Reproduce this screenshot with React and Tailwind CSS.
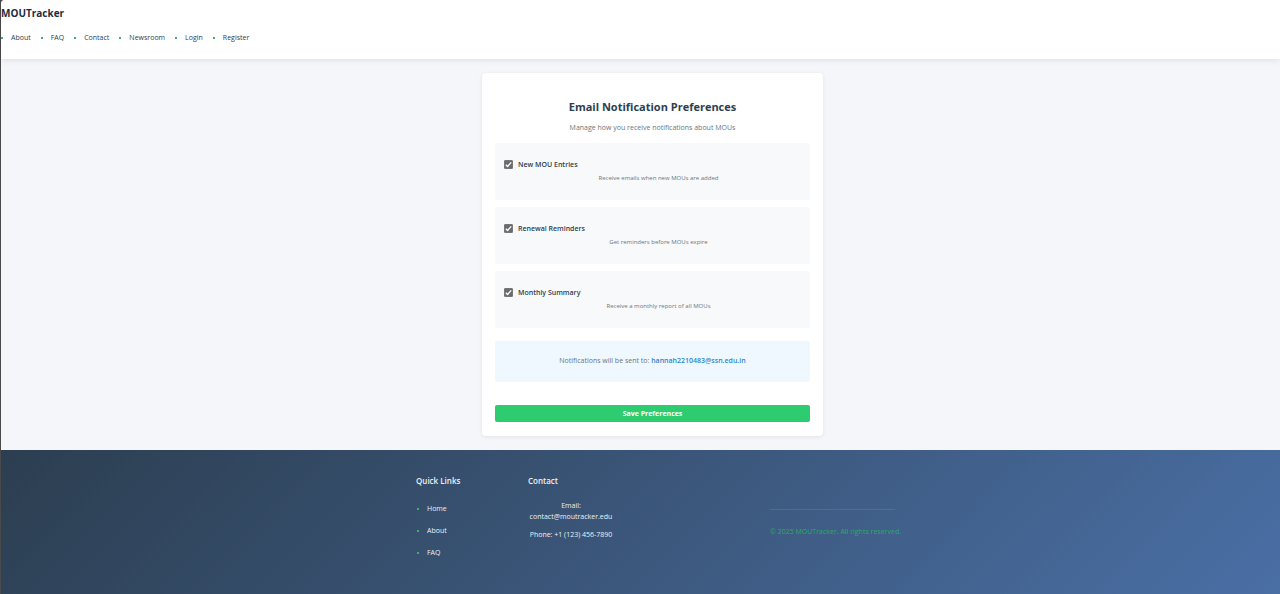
import React from "react";

const navLinks = ["About", "FAQ", "Contact", "Newsroom", "Login", "Register"];

const preferences = [
  { id: "new-entries", label: "New MOU Entries", text: "Receive emails when new MOUs are added" },
  { id: "renewals", label: "Renewal Reminders", text: "Get reminders before MOUs expire" },
  { id: "summary", label: "Monthly Summary", text: "Receive a monthly report of all MOUs" },
];

const footerLinks = ["Home", "About", "FAQ"];

function Bullet() {
  return <span aria-hidden="true" className="size-[2px] shrink-0 bg-[#3fae76]" />;
}

function Header() {
  return (
    <header className="relative rounded-tl bg-white pt-[5px] pb-[15px] shadow-[0_1px_6px_rgba(0,0,0,0.1)]">
      <div className="text-[10px] leading-4 font-bold text-[#1f2d3d]">MOUTracker</div>
      <nav className="mt-[11px]">
        <ul className="flex gap-[10px]">
          {navLinks.map((name) => (
            <li key={name} className="flex items-center gap-2">
              <Bullet />
              <a href="#" className="text-[7px] leading-3 text-[#2c3e50]">{name}</a>
            </li>
          ))}
        </ul>
      </nav>
    </header>
  );
}

function Preference({ id, label, text }) {
  return (
    <div className="rounded-xs bg-[#f8f9fa] px-[9px] pt-4 pb-[17px]">
      <div className="flex items-center gap-[5px]">
        <span className="relative size-[9px]">
          <input
            id={id}
            type="checkbox"
            defaultChecked
            className="peer block size-[9px] appearance-none rounded-[1px] border border-[#767676] bg-white checked:bg-[#6b6b6b]"
          />
          <svg
            viewBox="0 0 9 9"
            className="pointer-events-none absolute inset-0 hidden size-[9px] peer-checked:block"
            fill="none"
            stroke="#fff"
            strokeWidth="1.3"
          >
            <path d="M1.8 4.8 3.6 6.5 7.2 2.3" />
          </svg>
        </span>
        <label htmlFor={id} className="text-[7px] leading-[11px] font-semibold text-[#2c3e50]">{label}</label>
      </div>
      <p className="mt-[3px] pl-3 text-center text-[6px] leading-[10px] text-[#6c757d]">{text}</p>
    </div>
  );
}

function PreferencesCard() {
  return (
    <form
      onSubmit={(e) => e.preventDefault()}
      className="w-[341px] rounded bg-white px-[13px] pt-[25px] pb-[14px] shadow-[0_1px_4px_rgba(0,0,0,0.08)]"
    >
      <h1 className="text-center text-[11px] leading-[18px] font-bold text-[#2c3e50]">Email Notification Preferences</h1>
      <p className="mt-[7px] text-center text-[7px] leading-[10px] text-[#6c757d]">
        Manage how you receive notifications about MOUs
      </p>
      <div className="mt-[10px] flex flex-col gap-[7px]">
        {preferences.map((item) => (
          <Preference key={item.id} {...item} />
        ))}
      </div>
      <p className="mt-[13px] rounded-xs bg-[#f0f8ff] pt-[15px] pb-4 text-center text-[7px] leading-[10px] text-[#6c757d]">
        Notifications will be sent to: <strong className="font-semibold text-[#2e86d1]">hannah2210483@ssn.edu.in</strong>
      </p>
      <button type="submit" className="mt-[23px] block w-full rounded-xs bg-[#2ecc71] text-[7px] leading-[17px] font-bold text-white">
        Save Preferences
      </button>
    </form>
  );
}

function Footer() {
  return (
    <footer className="flex grow justify-center bg-linear-[135deg,#2c3e50,#4a6fa5] pt-[26px] pb-8 pl-[30px] text-[7px] text-[#ecf0f1]">
      <div className="grid grid-cols-[112px_242px_125px]">
        <div>
          <h2 className="text-[8px] leading-[10px] font-semibold">Quick Links</h2>
          <ul className="mt-[18px] flex flex-col gap-3">
            {footerLinks.map((name) => (
              <li key={name} className="flex items-center gap-2 pl-px">
                <Bullet />
                <a href="#" className="leading-[10px]">{name}</a>
              </li>
            ))}
          </ul>
        </div>
        <div>
          <h2 className="text-[8px] leading-[10px] font-semibold">Contact</h2>
          <div className="mt-[14px] w-[86px] text-center leading-[11px]">
            <p>Email:<br />contact@moutracker.edu</p>
            <p className="mt-[7px]">Phone: +1 (123) 456-7890</p>
          </div>
        </div>
        <div className="pt-[33px]">
          <p className="border-t border-white/10 pt-[17px] text-center leading-[10px] whitespace-nowrap text-[#27ae60]">
            © 2025 MOUTracker. All rights reserved.
          </p>
        </div>
      </div>
    </footer>
  );
}

export default function App() {
  return (
    <div className="min-h-screen bg-[#4a4a4a] pl-px font-['Open_Sans',sans-serif]">
      <div className="flex min-h-screen flex-col rounded-tl bg-[#f4f6fa]">
        <Header />
        <main className="flex justify-center pt-[14px] pb-[14px] pl-6">
          <PreferencesCard />
        </main>
        <Footer />
      </div>
    </div>
  );
}
